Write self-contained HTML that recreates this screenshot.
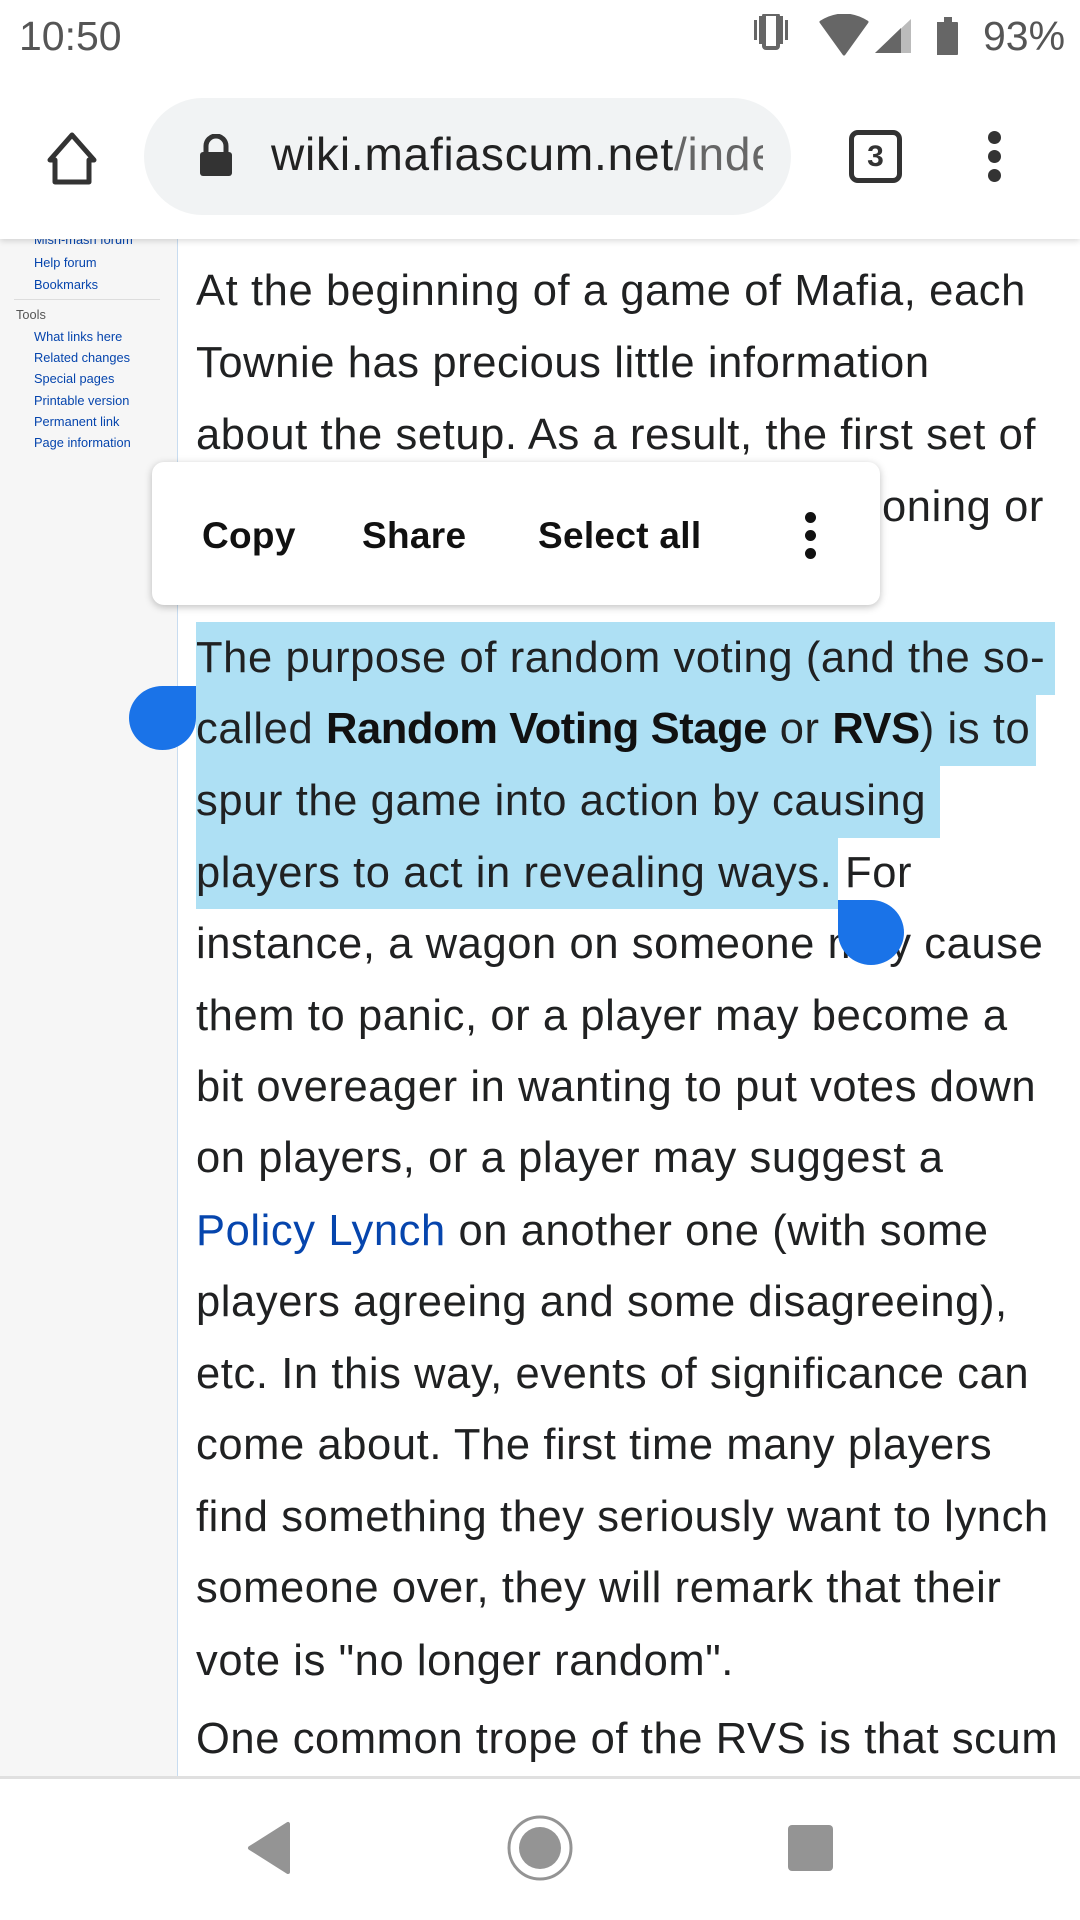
<!DOCTYPE html>
<html><head><meta charset="utf-8"><style>
*{margin:0;padding:0;box-sizing:border-box}
body{width:1080px;height:1920px;position:relative;overflow:hidden;background:#fff;font-family:"Liberation Sans",sans-serif;color:#202122}
.abs{position:absolute}
.sb{left:0;top:239px;width:178px;height:1538px;background:#f6f6f6;border-right:1px solid #c8dcf0}
.sl{position:absolute;left:34px;font-size:12.8px;color:#0645ad;white-space:nowrap}
.ln{position:absolute;left:196px;font-size:43.5px;letter-spacing:0.6px;line-height:72px;height:72px;white-space:nowrap;color:#202122}
.hl{position:absolute;background:#aee0f4}
b{font-weight:bold;color:#111;letter-spacing:-0.4px}
.mi{position:absolute;top:515px;font-size:37px;font-weight:bold;color:#111;white-space:nowrap;letter-spacing:0.3px}
</style></head><body>
<div class="abs sb"></div>
<div class="sl" style="top:232px">Mish-mash forum</div>
<div class="sl" style="top:255px">Help forum</div>
<div class="sl" style="top:277px">Bookmarks</div>
<div class="abs" style="left:14px;top:299px;width:146px;height:1px;background:#ddd"></div>
<div class="sl" style="top:307px;left:16px;color:#555">Tools</div>
<div class="sl" style="top:329px">What links here</div>
<div class="sl" style="top:350px">Related changes</div>
<div class="sl" style="top:371px">Special pages</div>
<div class="sl" style="top:393px">Printable version</div>
<div class="sl" style="top:414px">Permanent link</div>
<div class="sl" style="top:435px">Page information</div>

<div class="hl" style="left:196px;top:622px;width:859px;height:73px"></div>
<div class="hl" style="left:196px;top:694px;width:840px;height:72px"></div>
<div class="hl" style="left:196px;top:765px;width:744px;height:73px"></div>
<div class="hl" style="left:196px;top:837px;width:642px;height:72px"></div>

<div class="ln" style="top:255px">At the beginning of a game of Mafia, each</div>
<div class="ln" style="top:327px">Townie has precious little information</div>
<div class="ln" style="top:399px">about the setup. As a result, the first set of</div>
<div class="ln" style="top:471px;left:auto;right:36px">votes are cast without questioning or</div>
<div class="ln" style="top:543px">justification.</div>
<div class="ln" style="top:622px">The purpose of random voting (and the so-</div>
<div class="ln" style="top:693px">called <b>Random Voting Stage</b> or <b>RVS</b>) is to</div>
<div class="ln" style="top:765px">spur the game into action by causing</div>
<div class="ln" style="top:837px">players to act in revealing ways. For</div>
<div class="ln" style="top:908px">instance, a wagon on someone may cause</div>
<div class="ln" style="top:980px">them to panic, or a player may become a</div>
<div class="ln" style="top:1051px">bit overeager in wanting to put votes down</div>
<div class="ln" style="top:1122px">on players, or a player may suggest a</div>
<div class="ln" style="top:1195px"><span style="color:#0645ad">Policy Lynch</span> on another one (with some</div>
<div class="ln" style="top:1266px">players agreeing and some disagreeing),</div>
<div class="ln" style="top:1338px">etc. In this way, events of significance can</div>
<div class="ln" style="top:1409px">come about. The first time many players</div>
<div class="ln" style="top:1481px">find something they seriously want to lynch</div>
<div class="ln" style="top:1552px">someone over, they will remark that their</div>
<div class="ln" style="top:1625px">vote is "no longer random".</div>
<div class="ln" style="top:1703px">One common trope of the RVS is that scum</div>

<div class="abs" style="left:129px;top:686px;width:67px;height:64px;background:#1a73e8;border-radius:50% 0 50% 50%"></div>
<div class="abs" style="left:838px;top:900px;width:66px;height:65px;background:#1a73e8;border-radius:0 50% 50% 50%"></div>

<div class="abs" style="left:152px;top:462px;width:728px;height:143px;background:#fff;border-radius:12px;box-shadow:0 2px 8px rgba(0,0,0,.25)"></div>
<div class="mi" style="left:202px">Copy</div>
<div class="mi" style="left:362px">Share</div>
<div class="mi" style="left:538px">Select all</div>
<div class="abs" style="left:805px;top:512px;width:12px;height:48px">
<div style="width:11px;height:11px;border-radius:50%;background:#111;margin-bottom:7px"></div>
<div style="width:11px;height:11px;border-radius:50%;background:#111;margin-bottom:7px"></div>
<div style="width:11px;height:11px;border-radius:50%;background:#111"></div></div>

<div class="abs" style="left:0;top:0;width:1080px;height:239px;background:#fff;box-shadow:0 2px 6px rgba(0,0,0,.15)"></div>
<div class="abs" style="left:19px;top:13px;font-size:41px;color:#555">10:50</div>
<svg class="abs" style="left:748px;top:14px" width="200" height="44" viewBox="0 0 200 44">
<rect x="6" y="6" width="3" height="20" fill="#666"/><rect x="11" y="2" width="3" height="28" fill="#666"/>
<rect x="16" y="0" width="14" height="34" rx="2" fill="none" stroke="#666" stroke-width="4"/>
<rect x="32" y="2" width="3" height="28" fill="#666"/><rect x="37" y="6" width="3" height="20" fill="#666"/>
<path d="M96 40 L73 8 Q96 -6 119 8 Z" fill="#666" stroke="#666" stroke-width="3" stroke-linejoin="round"/>
<path d="M127 39 L163 5 L163 39Z" fill="#bbb"/><path d="M127 39 L153 14 L153 39Z" fill="#666"/>
<rect x="189" y="8" width="11" height="33" fill="#666"/>
</svg>
<svg class="abs" style="left:935px;top:14px" width="26" height="44" viewBox="0 0 26 44">
<rect x="3" y="8" width="20" height="33" rx="1" fill="#666"/><rect x="9" y="3" width="8" height="6" fill="#666"/></svg>
<div class="abs" style="left:983px;top:13px;font-size:41px;color:#555">93%</div>

<svg class="abs" style="left:44px;top:130px" width="56" height="56" viewBox="0 0 56 56">
<path d="M28 5 L50 30 L45 30 L45 52 L11 52 L11 30 L6 30 Z" fill="none" stroke="#333" stroke-width="5" stroke-linejoin="round"/></svg>
<div class="abs" style="left:144px;top:98px;width:647px;height:117px;border-radius:59px;background:#f1f3f4"></div>
<svg class="abs" style="left:198px;top:134px" width="36" height="44" viewBox="0 0 36 44">
<path d="M8 18 V12 a10 10 0 0 1 20 0 V18" fill="none" stroke="#333" stroke-width="5"/>
<rect x="2" y="18" width="32" height="24" rx="3" fill="#333"/></svg>
<div class="abs" style="left:271px;top:127px;width:492px;overflow:hidden;white-space:nowrap;font-size:46px;letter-spacing:0.8px;color:#222">wiki.mafiascum.net<span style="color:#666">/index.php</span></div>
<div class="abs" style="left:849px;top:130px;width:53px;height:53px;border:5px solid #333;border-radius:9px;font-size:30px;font-weight:bold;text-align:center;line-height:43px;color:#333">3</div>
<div class="abs" style="left:988px;top:131px;width:13px">
<div style="width:13px;height:13px;border-radius:50%;background:#333;margin-bottom:6px"></div>
<div style="width:13px;height:13px;border-radius:50%;background:#333;margin-bottom:6px"></div>
<div style="width:13px;height:13px;border-radius:50%;background:#333"></div></div>

<div class="abs" style="left:0;top:1776px;width:1080px;height:144px;background:#fff;border-top:3px solid #e0e0e0"></div>
<svg class="abs" style="left:240px;top:1820px" width="56" height="56" viewBox="0 0 56 56">
<path d="M48 4 L48 52 L10 28 Z" fill="#949494" stroke="#949494" stroke-width="4" stroke-linejoin="round"/></svg>
<svg class="abs" style="left:505px;top:1813px" width="70" height="70" viewBox="0 0 70 70">
<circle cx="35" cy="35" r="31" fill="none" stroke="#949494" stroke-width="3"/><circle cx="35" cy="35" r="21" fill="#949494"/></svg>
<div class="abs" style="left:788px;top:1825px;width:45px;height:46px;background:#949494;border-radius:4px"></div>
</body></html>
